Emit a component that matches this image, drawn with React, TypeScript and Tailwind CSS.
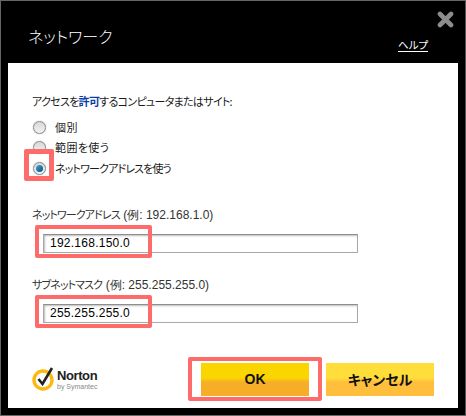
const jp = "font-['Noto_Sans_CJK_JP','Liberation_Sans',sans-serif] [font-feature-settings:'palt']";

function Radio({ label, narrow, checked }: { label: string; narrow?: boolean; checked?: boolean }) {
  return (
    <div className="flex h-[20.5px] items-center">
      <span className="flex h-[13px] w-[13px] items-center justify-center rounded-full border border-[#8f8f8f] bg-gradient-to-b from-[#d8d8d8] to-[#f2f2f2] shadow-[0_0_1px_#777]">
        {checked && <span className="h-[7px] w-[7px] rounded-full bg-gradient-to-br from-[#3fa6d8] to-[#06507f]" />}
      </span>
      <span className={`ml-[9px] text-[11px] leading-none text-[#1a1a1a] ${narrow ? 'tracking-[-0.85px]' : 'tracking-[0.4px]'}`}>{label}</span>
    </div>
  );
}

function AddressField({ label, hint, value }: { label: string; hint: string; value: string }) {
  return (
    <div>
      <div className="h-[18px] text-[11px] leading-[18px] tracking-[-0.9px] text-[#333]">
        {label} <span className="ml-[2px] font-['Liberation_Sans',sans-serif] text-[12px] tracking-normal text-[#333]">{hint}</span>
      </div>
      <div className="relative ml-[11px] mt-[11px] flex h-[19px] w-[315px] items-center border border-[#a9a9a9] border-t-[#8e8e8e] bg-white pl-[6px] shadow-[inset_1px_1px_2px_#bbb] font-['Liberation_Sans',sans-serif] text-[12px] tracking-[0.25px] text-black">
        {value}
        <div className="absolute left-[-9px] top-[-10px] h-[33px] w-[117px] rounded-[2px] border-[4px] border-[#fd6b6b]" />
      </div>
    </div>
  );
}

export default function App() {
  return (
    <div className={`${jp} flex h-[416px] w-[466px] flex-col border border-[#666] border-r-[#555] bg-black`}>
      {/* Header */}
      <div className="relative h-[62px] shrink-0">
        <div className="pl-[27px] pt-[21px] text-[16px] font-light leading-[28px] text-white">ネットワーク</div>
        <svg className="absolute left-[436px] top-[10px]" width="17" height="17" viewBox="0 0 17 17">
          <path d="M3 3 L14 14 M14 3 L3 14" stroke="#8d8d8d" strokeWidth="4.6" strokeLinecap="round" />
        </svg>
        <span className="absolute left-[397px] top-[37px] border-b border-white text-[10.5px] leading-[13px] text-white">ヘルプ</span>
      </div>

      {/* Body */}
      <div className="relative mx-[7px] flex h-[345px] shrink-0 flex-col bg-white px-[24px]">
        <div className="mt-[29px] text-[11px] leading-[18px] tracking-[-0.7px] text-[#1a1a1a]">
          アクセスを<span className="font-bold text-[#0b3fa5]">許可</span>するコンピュータまたはサイト:
        </div>

        <div className="relative mt-[7px] pl-[1px]">
          <Radio label="個別" />
          <Radio label="範囲を使う" />
          <Radio label="ネットワークアドレスを使う" narrow checked />
          <div className="absolute left-[-8px] top-[32px] h-[32px] w-[30px] rounded-[2px] border-[5px] border-[#fd6b6b]" />
        </div>

        <div className="mt-[26px]">
          <AddressField label="ネットワークアドレス" hint="(例: 192.168.1.0)" value="192.168.150.0" />
        </div>
        <div className="mt-[22px]">
          <AddressField label="サブネットマスク" hint="(例: 255.255.255.0)" value="255.255.255.0" />
        </div>

        {/* Footer */}
        <div className="mt-[40px] flex items-start">
          <div className="mt-[2px] flex w-[169px] items-center">
            <svg width="24" height="26" viewBox="0 0 24 26">
              <circle cx="11" cy="15" r="9" fill="none" stroke="#fdb913" strokeWidth="3.4" />
              <path d="M6.5 14 L10.5 19 L20 3" fill="none" stroke="#222" strokeWidth="2.6" />
            </svg>
            <div className="ml-[1px] mt-[4px] font-['Liberation_Sans',sans-serif]">
              <div className="text-[13px] font-bold leading-[13px] tracking-[-0.4px] text-[#222]">Norton</div>
              <div className="text-[7px] leading-[9px] text-[#888]">by Symantec</div>
            </div>
          </div>
          <div className="relative flex h-[33px] w-[108px] items-center justify-center bg-[linear-gradient(#fbd500_0_46%,#f6ae28_58%_100%)] text-[14px] font-bold text-[#111]">
            <span className="font-['Liberation_Sans',sans-serif]">OK</span>
            <div className="absolute left-[-13px] top-[-6px] h-[44px] w-[134px] rounded-[2px] border-[4px] border-[#fd6b6b]" />
          </div>
          <div className="ml-[17px] flex h-[33px] w-[108px] items-center justify-center bg-[linear-gradient(#ffdd3a_0_46%,#ffbe3c_58%_100%)] text-[14px] font-bold text-[#111]">
            キャンセル
          </div>
        </div>
      </div>
    </div>
  );
}
